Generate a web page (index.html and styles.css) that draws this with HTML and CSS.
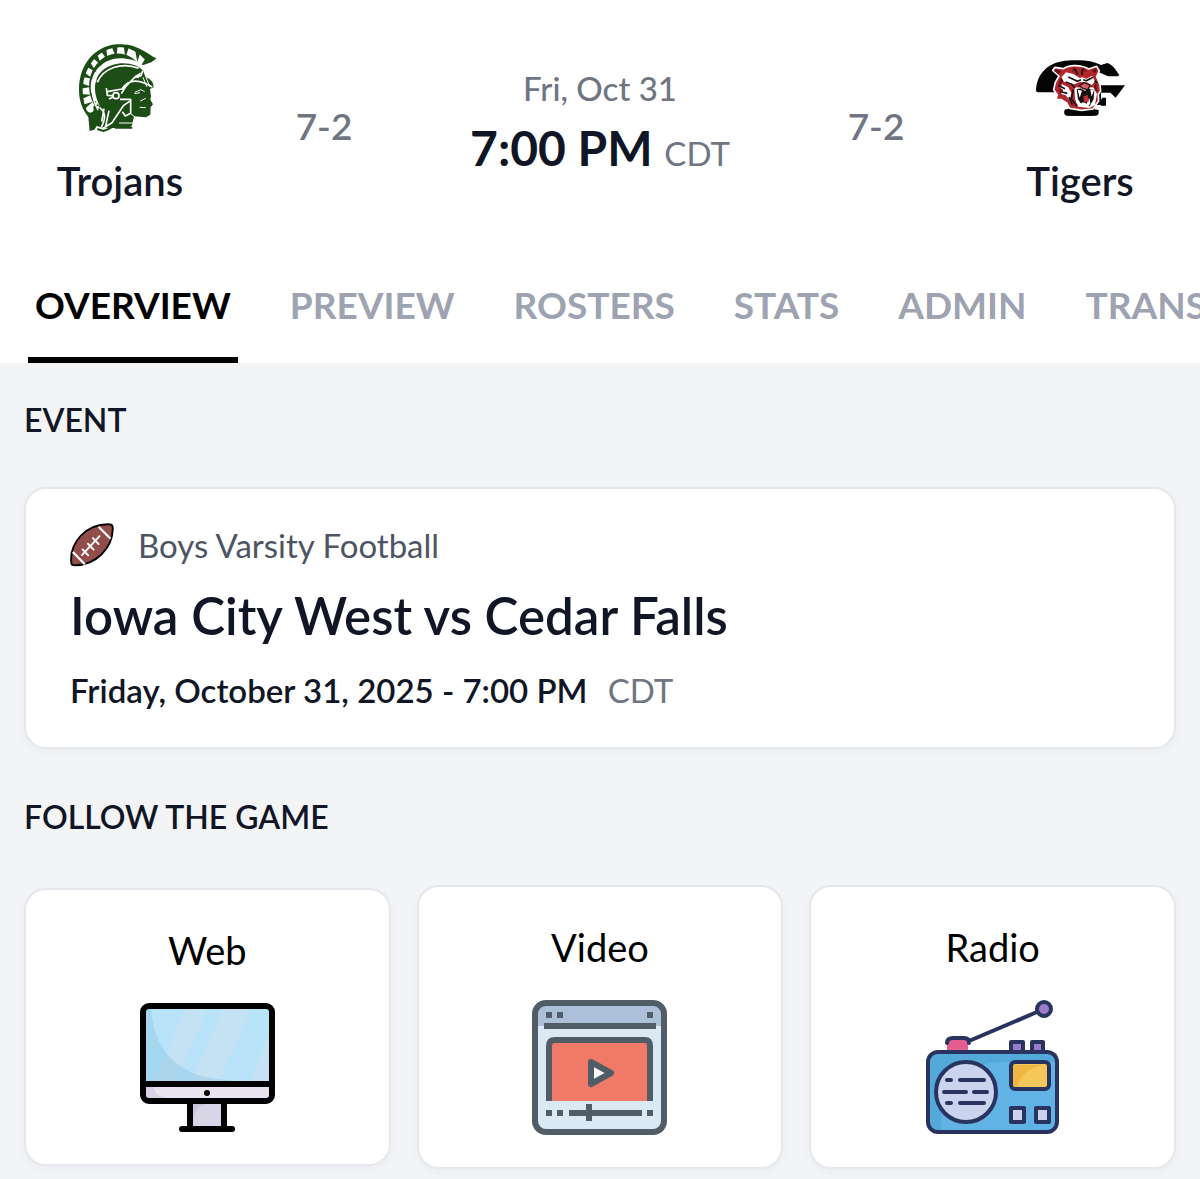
FILE: index.html
```html
<!DOCTYPE html>
<html lang="en">
<head>
<meta charset="utf-8">
<meta name="viewport" content="width=device-width, initial-scale=1">
<title>Iowa City West vs Cedar Falls</title>
<link rel="stylesheet" href="styles.css">
</head>
<body>
<header class="scoreboard">
  <div class="team">
    <svg class="team-logo" viewBox="0 0 360 360" role="img" aria-label="Trojans logo">
      <path fill="#1b4d14" d="M288 89 268 76C235 52 203 43 170 46 102 52 58 108 57 180c0 38 10 60 28 84l4 42 14-4 34-55c-26-22-45-44-45-69 0-54 42-90 88-90 25 0 48 6 70 20l24-8z"/>
      <path fill="#fff" d="M256 93A110 130 0 0 0 81 246L104 230A84 96 0 0 1 242 113z"/>
      <path fill="#1b4d14" d="m242 66-10 33-8-43zM208 50l-12 37-5-38zM173 48l-4 39-15-37zM138 57l6 38-22-29zM111 74l14 36-27-24zM89 98l21 32-30-16zM69 127l30 23-33-7zM60 161l34 12-32 6zM59 195l35 2-30 14zM66 228l32-10-24 22zM262 79l28 9-46 21z"/>
      <circle cx="91" cy="241" r="10" fill="#fff"/>
      <path fill="#1b4d14" d="M122 235c-35-63-15-121 52-131 34-4 62 6 76 22l6 18c18 7 24 15 25 31l-11 5 3 22-2 10 8 14-7 8-1 23-13 8-36-3-6 27-8 8h-50l-30-1-18-5z"/>
      <path fill="none" stroke="#fff" stroke-width="4" d="M114 244C84 190 92 112 170 98c30-4 54 0 76 18"/>
      <path fill="none" stroke="#fff" stroke-width="7" stroke-dasharray="8 4" d="M107 151c-14 29-10 58 10 87"/>
      <path fill="none" stroke="#fff" stroke-width="5" stroke-linejoin="round" d="M112 160c17-41 72-63 124-42M248 125l-5 15-20 6-27 28-12 20M139 177l3 22 20 1M142 188l44-8c16-25 45-34 91-6M147 210l19-9M180 211h32v42l-16 8-9-13M212 215l-21 14-35 52-34 21M120 237c17 13 16 35 4 57M147 245l-10 46M132 239l-7 39"/>
      <path fill="#fff" d="m222 142 22-12-8 18z"/>
      <circle cx="168" cy="200" r="9" fill="#1b4d14" stroke="#fff" stroke-width="5"/>
      <path fill="none" stroke="#fff" stroke-width="3" d="m249 145 12 29M258 145l12 29M224 190l19-8 11 6M240 191l-16 3M241 216l16-8M239 235l18 1M212 254l24 18-14 10h-45"/>
      <path fill="none" stroke="#1b4d14" stroke-width="6" d="m112 300 18 6c25-8 41-20 50-36M165 296h52"/>
    </svg>
    <span class="team-name">Trojans</span>
  </div>
  <span class="record">7-2</span>
  <div class="kickoff">
    <span class="kickoff-date">Fri, Oct 31</span>
    <span class="kickoff-time">7:00 PM <span class="zone">CDT</span></span>
  </div>
  <span class="record">7-2</span>
  <div class="team">
    <svg class="team-logo" viewBox="0 -32 360 360" role="img" aria-label="Tigers logo">
      <path fill="#050505" d="M48 152c3-58 46-91 112-90 31-2 56 1 83 14l19-6c15 4 25 21 36 35l-4 5h-30l-36-16-20-2v45h107l-28 37-16-15h-28v20h14v19h-14v-7h-20v18l13 2v10q-1 7-10 7h-80q-12 0-12-10v-8l17-4v-48H54q-6 0-6-6z"/>
      <path fill="#050505" d="M228 182h30v14h-30zM246 174h12v23h-12zM133 213h94v8q0 7-10 7h-74q-10 0-10-8z"/>
      <path fill="#b3262b" stroke="#fff" stroke-width="5" stroke-linejoin="round" d="m98 92 7-9 25 4c14-10 48-15 76 1l24-8 8 14-8 17 10 25 2 18-7 10 1 20-17 24-34 4-36-6-10-17-15-9-17-1 5-13-11-16 5-22 11-19z"/>
      <path fill="#641418" d="m106 89 18 4-8 11-13-9zM216 92l14-7-2 14-9-1zM120 119l15-15-7 23-16 19zM116 152l12-8-2 24zM219 147l9-17 4 25-9 8zM160 82l9 10-13 4zM190 82l-3 10 12 5z"/>
      <path fill="#fff" d="m138 98 22 5 19 12 8-2 13 4 16-9 9 17-10 12-14-9-22-1-22 9-25-10-8-13zM126 134l19 9 9 17-5 22-12-15-14-4 7-11-9-8zM163 143l30 1 27-1 11 19-6 34-17 9-34-4-9-23z"/>
      <path fill="none" stroke="#17100f" stroke-width="5" stroke-linejoin="round" d="m145 112 27 13 11-5M219 113l-20 10-9-3M137 127l19 7 9 12M117 138l18 9M125 157l17 4M165 87l8 18M187 87l-1 19M224 123l8 7M147 172l10 23M160 150l-6 28 17 21"/>
      <path fill="#d65f65" stroke="#17100f" stroke-width="4" d="m178 138 14-9 18 7-6 14-14-3z"/>
      <path fill="#151010" d="m170 149 12-3 12 7 16-6 13 4-2 27-12 22-22-2-13-19z"/>
      <path fill="#fff" d="m173 150 6 24 7-21zM211 149l4 22 7-20zM177 177l4 15 8-4 11 4 8-18 3 18-8 9-19 1z"/>
      <path fill="#bb3037" d="m190 170 14-4 2 20-14 3z"/>
    </svg>
    <span class="team-name">Tigers</span>
  </div>
</header>
<nav class="tabs" aria-label="Game sections">
  <a class="tab tab-active" href="#overview" aria-current="page">OVERVIEW</a>
  <a class="tab" href="#preview">PREVIEW</a>
  <a class="tab" href="#rosters">ROSTERS</a>
  <a class="tab" href="#stats">STATS</a>
  <a class="tab" href="#admin">ADMIN</a>
  <a class="tab" href="#trans">TRANS</a>
</nav>
<main class="content" id="overview">
  <h2 class="section-title">EVENT</h2>
  <section class="card event">
    <div class="sport">
      <svg class="sport-icon" viewBox="0 0 140 140" aria-hidden="true">
        <path fill="#914d49" stroke="#080404" stroke-width="6" stroke-linejoin="round" d="M10 134Q4 134 4 126C-2 62 52 2 124 4q11 0 12 10C138 80 80 138 10 134z"/>
        <path fill="none" stroke="#fff" stroke-width="7" d="m91 12 38 38M9 92l38 39"/>
        <path fill="none" stroke="#fff" stroke-width="6" stroke-linecap="round" d="m38 102 56-60M40 84l18 19M57 66l18 19M73 48l18 19"/>
      </svg>
      <span>Boys Varsity Football</span>
    </div>
    <h1 class="event-title">Iowa City West vs Cedar Falls</h1>
    <p class="event-date">Friday, October 31, 2025 - 7:00 PM <span class="zone event-zone">CDT</span></p>
  </section>
  <h2 class="section-title">FOLLOW THE GAME</h2>
  <div class="channels">
    <a class="card channel channel-compact" href="#web">
      <span>Web</span>
      <svg class="channel-icon" viewBox="0 0 135 135" aria-hidden="true">
        <defs><clipPath id="screen"><path d="M5 5h125v74H5z"/></clipPath></defs>
        <path fill="#d8d5e6" d="M50 98h35v28H50z"/>
        <path fill="#c9c6dc" d="M52 100h20c-12 0-19 8-19 20z"/>
        <rect x="3" y="3" width="129" height="95" rx="6" fill="#eae4f0"/>
        <path fill="#d8d3e7" d="M6 83h8c0 8 5 11 15 12H8l-2-3z"/>
        <g clip-path="url(#screen)">
          <path fill="#b9e3f8" d="M0 0h135v84H0z"/>
          <path fill="#c5e1f4" d="M47 0h23L33 82H14zM86 0h27L78 82H49zM128 32h7v50h-27z"/>
          <path fill="#73b8da" opacity=".3" d="M5 5h6c2 42 28 71 79 72v4H5z"/>
        </g>
        <rect x="3" y="3" width="129" height="95" rx="6" fill="none" stroke="#020203" stroke-width="6"/>
        <path fill="none" stroke="#020203" stroke-width="6" stroke-linecap="round" d="M3 81h129M50 99v26M84 99v26M42 126h50"/>
        <circle cx="67" cy="90" r="3" fill="#020203"/>
      </svg>
    </a>
    <a class="card channel" href="#video">
      <span>Video</span>
      <svg class="channel-icon" viewBox="0 0 135 135" aria-hidden="true">
        <rect x="3" y="3" width="129" height="129" rx="11" fill="#dbe9f4"/>
        <path fill="#acc0da" d="M5 26V13q0-8 9-8h107q9 0 9 8v13z"/>
        <rect x="3" y="3" width="129" height="129" rx="11" fill="none" stroke="#505c66" stroke-width="6"/>
        <path fill="#f07968" d="M17 40h101v61H17z"/>
        <g fill="#505c66">
          <path d="M12 23h112v6H12zM14 12h6v6h-6zM25 12h6v6h-6zM115 12h6v6h-6zM14 110h6v6h-6zM25 110h6v6h-6zM115 110h6v6h-6zM37 110h73v6H37zM54 104h6v17h-6z"/>
        </g>
        <path fill="none" stroke="#505c66" stroke-width="6" d="M17 101V46q0-6 6-6h90q5 0 5 6v55"/>
        <path fill="#fff" stroke="#505c66" stroke-width="6" stroke-linejoin="round" d="m59 62 20 11-20 11z"/>
      </svg>
    </a>
    <a class="card channel" href="#radio">
      <span>Radio</span>
      <svg class="channel-icon" viewBox="0 0 135 135" aria-hidden="true">
        <rect x="3" y="52" width="129" height="80" rx="10" fill="#61b2e5"/>
        <path fill="#459dce" opacity=".45" d="M3 62q0-9 10-9h119v9H85c-45-2-69 20-69 68h-3q-10 0-10-9z"/>
        <path fill="#e55d91" d="M22 52v-9q0-4 5-4h12q4 0 4 4v9z"/>
        <path fill="#9b7ccb" d="M88 43h10v8H88zM108 43h10v8h-10z"/>
        <circle cx="119" cy="9" r="6" fill="#9b7ccb"/>
        <g fill="none" stroke="#28345f" stroke-width="4" stroke-linejoin="round" stroke-linecap="round">
          <circle cx="119" cy="9" r="7"/>
          <path d="m112 12-68 29M22 43q0-5 6-5h11q5 0 5 5M86 51v-9h12v9M107 51v-9h11v9"/>
          <rect x="3" y="52" width="129" height="80" rx="10"/>
          <circle cx="41" cy="92" r="30" fill="#cbd3ef"/>
          <path d="M22 80h4M35 80h24M19 92h22M49 92h13M22 103h4M35 103h24"/>
          <rect x="86" y="62" width="38" height="27" rx="4" fill="#f5c75b"/>
          <path fill="#cbd3ef" d="M86 108h13v14H86zM111 108h13v14h-13z"/>
        </g>
        <path fill="#efb641" d="M89 65h32c-15 1-25 8-29 22h-2q-2-1-2-3V66z"/>
      </svg>
    </a>
  </div>
</main>
</body>
</html>
```
FILE: styles.css
```css
* {
  box-sizing: border-box;
}

body {
  margin: 0;
  background: #f2f4f6;
  color: #111626;
  font-family: Lato, "Open Sans", sans-serif;
}

h1, h2, p {
  margin: 0;
  font-weight: 600;
}

a {
  color: inherit;
  text-decoration: none;
}

.scoreboard {
  display: grid;
  grid-template-columns: 20% 14% 1fr 14% 20%;
  padding: 29px 0 41px;
  background: #fff;
}

.team {
  display: flex;
  flex-direction: column;
  align-items: center;
}

.team-logo {
  width: 120px;
  height: 120px;
}

.team-name {
  font-size: 40px;
  line-height: 64px;
  font-weight: 600;
}

.record {
  padding-top: 75px;
  color: #6f7582;
  font-size: 37px;
  font-weight: 600;
  line-height: 44px;
  text-align: center;
}

.kickoff {
  display: flex;
  flex-direction: column;
  align-items: center;
  padding-top: 39px;
}

.kickoff-date {
  color: #6f7582;
  font-size: 33px;
  font-weight: 500;
  line-height: 40px;
}

.kickoff-time {
  font-size: 48px;
  font-weight: 700;
  line-height: 80px;
}

.zone {
  color: #6f7582;
  font-size: 33px;
  font-weight: 400;
}

.tabs {
  display: flex;
  gap: 45px;
  padding-left: 28px;
  overflow: hidden;
  background: #fff;
}

.tab {
  flex: none;
  padding: 23px 7px 24px;
  border-bottom: 6px solid transparent;
  color: #9da3b0;
  font-size: 37px;
  font-weight: 700;
  line-height: 56px;
}

.tab-active {
  border-color: #000;
  color: #000;
}

.content {
  padding: 33px 24px 10px;
}

.section-title {
  font-size: 32px;
  line-height: 48px;
}

.card {
  border: 2px solid #e6e7ed;
  border-radius: 22px;
  background: #fff;
  box-shadow: 0 3px 6px #dfe1e655;
}

.event {
  margin: 43px 0 44px;
  padding: 32px 44px 29px;
}

.sport {
  display: flex;
  align-items: center;
  gap: 24px;
  color: #4d5463;
  font-size: 33px;
  line-height: 48px;
}

.sport-icon {
  width: 44px;
  height: 44px;
}

.event-title {
  font-size: 51px;
  line-height: 93px;
}

.event-date {
  font-size: 33px;
  line-height: 56px;
}

.event-zone {
  margin-left: 12px;
}

.channels {
  display: grid;
  grid-template-columns: repeat(3, 1fr);
  align-items: center;
  gap: 26px;
  margin-top: 44px;
}

.channel {
  display: flex;
  flex-direction: column;
  align-items: center;
  gap: 25px;
  padding: 32px 20px;
  color: #000;
  font-size: 38px;
  line-height: 56px;
}

.channel-compact {
  padding-block: 32px 26px;
}

.channel-icon {
  width: 135px;
  height: 135px;
}
```
